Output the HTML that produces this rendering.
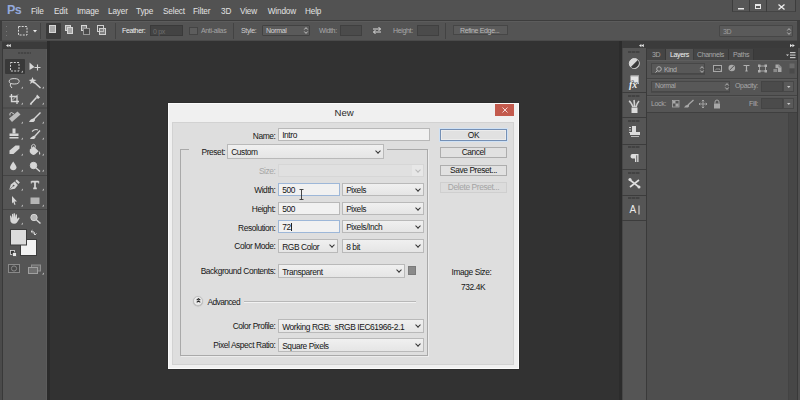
<!DOCTYPE html>
<html><head><meta charset="utf-8">
<style>
*{box-sizing:border-box;margin:0;padding:0}
html,body{width:800px;height:400px;overflow:hidden;background:#323232;font-family:"Liberation Sans",sans-serif}
.a{position:absolute}
.t{position:absolute;white-space:nowrap;line-height:1}
svg{position:absolute;overflow:visible}
/* menu */
#menubar{left:0;top:0;width:800px;height:21px;background:#525252;border-bottom:1px solid #3d3d3d}
.mi{position:absolute;top:7.6px;font-size:8.2px;letter-spacing:-0.15px;color:#e2e2e2;white-space:nowrap;line-height:1}
#opts{left:0;top:21px;width:798px;height:20px;background:#545454;border-top:1px solid #5c5c5c;box-shadow:inset 0 -1px 0 #4a4a4a}
.ot{position:absolute;font-size:7px;letter-spacing:-0.35px;color:#e0e0e0;white-space:nowrap;line-height:1}
.osep{position:absolute;top:23px;width:1px;height:16px;background:#434343}
/* panels */
.hdr{background:#3b3b3b}
.pan{background:#555555}
.grip{position:absolute;height:2px;background:repeating-linear-gradient(90deg,#6b6b6b 0 1px,#4a4a4a 1px 2px)}
.tri{position:absolute;width:0;height:0;border-left:2px solid transparent;border-bottom:2px solid #bdbdbd}
/* dialog */
#dlg{left:168px;top:103px;width:351px;height:266px;background:#f0f0f0;border:1px solid #fbfbfb;box-shadow:0 0 1px #1a1a1a}
.dl{position:absolute;font-size:8.4px;letter-spacing:-0.4px;color:#151515;white-space:nowrap;line-height:1}
.inp{position:absolute;background:#f1f1f1;border:1px solid #b8b8b8;font-size:8.4px;letter-spacing:-0.4px;color:#151515;line-height:11px;padding-left:3.2px;padding-top:1px;white-space:nowrap}
.sel{position:absolute;background:linear-gradient(#f0f0f0,#e5e5e5);border:1px solid #b9b9b9;font-size:8.4px;letter-spacing:-0.4px;color:#151515;line-height:11px;padding-left:3.2px;padding-top:1px;white-space:nowrap}
.chev{position:absolute;width:4px;height:4px;border-right:1px solid #333;border-bottom:1px solid #333;transform:rotate(45deg)}
.btn{position:absolute;background:#e1e1e1;border:1px solid #adadad;font-size:8.4px;letter-spacing:-0.4px;color:#151515;text-align:center;line-height:9px;white-space:nowrap}
</style></head>
<body>
<!-- MENU BAR -->
<div id="menubar" class="a">
  <div class="t" style="left:7px;top:4px;font-size:12.5px;font-weight:bold;color:#94a9dc;letter-spacing:-0.7px">Ps</div>
  <div class="mi" style="left:31px">File</div>
  <div class="mi" style="left:54px">Edit</div>
  <div class="mi" style="left:77px">Image</div>
  <div class="mi" style="left:108px">Layer</div>
  <div class="mi" style="left:136px">Type</div>
  <div class="mi" style="left:163px">Select</div>
  <div class="mi" style="left:193px">Filter</div>
  <div class="mi" style="left:221px">3D</div>
  <div class="mi" style="left:240px">View</div>
  <div class="mi" style="left:267.8px">Window</div>
  <div class="mi" style="left:305px">Help</div>
  <!-- window buttons -->
  <div class="a" style="left:732px;top:0;width:64px;height:12px;background:#575757;border-right:1px solid #3d3d3d;border-left:1px solid #3d3d3d;border-bottom:1px solid #444"></div>
  <div class="a" style="left:749px;top:0;width:1px;height:12px;background:#3d3d3d"></div>
  <div class="a" style="left:766px;top:0;width:1px;height:12px;background:#3d3d3d"></div>
  <div class="a" style="left:738px;top:8px;width:6px;height:1px;background:#e8e8e8;box-shadow:0 0.5px 0 #e8e8e8"></div>
  <div class="a" style="left:755px;top:4px;width:6px;height:5px;border:1px solid #e8e8e8;border-top-width:2px"></div>
  <svg style="left:778px;top:4px" width="7" height="6"><path d="M0.5 0.5L6.5 5.5M6.5 0.5L0.5 5.5" stroke="#eee" stroke-width="1.3"/></svg>
</div>

<!-- OPTIONS BAR -->
<div id="opts" class="a"></div>
<div class="a" style="left:0;top:41px;width:2px;height:359px;background:#4a4a4a"></div><div class="a" style="left:0;top:21px;width:2px;height:20px;background:#3c3c3c"></div>
<div class="a" style="left:797px;top:21px;width:3px;height:20px;background:#3f3f3f"></div>
<!-- grip dots -->
<div class="a" style="left:6px;top:26px;width:1px;height:1px;background:#777"></div>
<div class="a" style="left:6px;top:31px;width:1px;height:1px;background:#777"></div>
<div class="a" style="left:6px;top:35px;width:1px;height:1px;background:#777"></div>
<svg style="left:17px;top:25px" width="12" height="12"><rect x="1.5" y="1.5" width="8.5" height="8.5" fill="none" stroke="#d8d8d8" stroke-dasharray="2 1.2"/></svg>
<svg style="left:33px;top:30px" width="4" height="3"><path d="M0 0H4L2 2.5Z" fill="#e8e8e8"/></svg>
<div class="osep" style="left:40px"></div>
<div class="a" style="left:46px;top:23px;width:15px;height:16px;background:#3b3b3b;border-radius:1px"></div>
<div class="a" style="left:49px;top:25px;width:7px;height:8px;background:#a9a9a9;border:1px solid #d6d6d6"></div>
<!-- add -->
<div class="a" style="left:65px;top:25px;width:6px;height:6px;background:#9c9c9c;border:1px solid #d6d6d6"></div>
<div class="a" style="left:67px;top:27px;width:6px;height:7px;background:#a8a8a8;border:1px solid #d6d6d6"></div>
<!-- subtract -->
<div class="a" style="left:81px;top:25px;width:6px;height:6px;background:#8a8a8a;border:1px solid #d6d6d6"></div>
<div class="a" style="left:83px;top:28px;width:7px;height:7px;background:#4a4a4a;border:1px solid #9a9a9a"></div>
<!-- intersect -->
<div class="a" style="left:97px;top:25px;width:7px;height:7px;border:1px solid #d0d0d0"></div>
<div class="a" style="left:99px;top:28px;width:7px;height:7px;border:1px solid #d0d0d0;background:rgba(170,170,170,.5)"></div>
<div class="osep" style="left:115px"></div>
<div class="ot" style="left:122px;top:27px;color:#eeeeee;">Feather:</div>
<div class="a" style="left:150px;top:25px;width:33px;height:11px;background:#434343;border:1px solid #3a3a3a"></div>
<div class="ot" style="left:153px;top:27.5px;color:#6e6e6e">0 px</div>
<div class="a" style="left:189px;top:27px;width:9px;height:8px;background:#5d5d5d;border:1px solid #444"></div>
<div class="ot" style="left:201px;top:27px;color:#a4a4a4;">Anti-alias</div>
<div class="osep" style="left:233px"></div>
<div class="ot" style="left:241px;top:27px;color:#cfcfcf;">Style:</div>
<div class="a" style="left:262px;top:25px;width:48px;height:11px;background:#5a5a5a;border:1px solid #424242;border-radius:1px"></div>
<div class="ot" style="left:266px;top:27px;color:#d4d4d4;">Normal</div>
<svg style="left:304px;top:27px" width="4" height="7"><path d="M0.3 2.5L2 0.6L3.7 2.5M0.3 4.5L2 6.4L3.7 4.5" stroke="#cfcfcf" stroke-width="0.9" fill="none"/></svg>
<div class="ot" style="left:319px;top:27px;color:#a8a8a8;">Width:</div>
<div class="a" style="left:340px;top:25px;width:22px;height:11px;background:#4b4b4b;border:1px solid #404040"></div>
<svg style="left:372px;top:26px" width="10" height="9"><path d="M1 3H8.5M6.5 1L8.5 3L6.5 5M9 6H1.5M3.5 4L1.5 6L3.5 8" stroke="#dcdcdc" stroke-width="1" fill="none"/></svg>
<div class="ot" style="left:393px;top:27px;color:#a8a8a8;">Height:</div>
<div class="a" style="left:417px;top:25px;width:22px;height:11px;background:#4b4b4b;border:1px solid #404040"></div>
<div class="osep" style="left:445px"></div>
<div class="a" style="left:453px;top:25px;width:55px;height:10px;background:#5b5b5b;border:1px solid #464646"></div>
<div class="ot" style="left:460px;top:27px;color:#bcbcbc;">Refine Edge...</div>
<div class="a" style="left:719px;top:25px;width:74px;height:12px;background:#5a5a5a;border:1px solid #474747;border-radius:1px"></div>
<div class="ot" style="left:723px;top:28px;color:#9e9e9e">3D</div>
<svg style="left:787px;top:28px" width="4" height="7"><path d="M0.3 2.5L2 0.6L3.7 2.5M0.3 4.5L2 6.4L3.7 4.5" stroke="#bdbdbd" stroke-width="0.9" fill="none"/></svg>

<!-- LEFT TOOLS -->
<div class="a hdr" style="left:2px;top:41px;width:45px;height:7.5px;border-top:1px solid #444"></div>
<svg style="left:5.5px;top:43.5px" width="5" height="4"><path d="M0 1.6L2.4 0V3.2ZM2.4 1.6L4.8 0V3.2Z" fill="#e8e8e8"/></svg>
<div class="a pan" style="left:2px;top:48.5px;width:45px;height:352px;border-left:1px solid #393939;border-right:1px solid #5b5b5b"></div><div class="a" style="left:47px;top:41px;width:3px;height:359px;background:#2b2b2b"></div>
<div class="grip" style="left:18px;top:51.5px;width:13px;height:2px;background:repeating-linear-gradient(90deg,#454545 0 2px,#505050 2px 3px)"></div>
<div class="a" style="left:5px;top:59px;width:20px;height:15px;background:#393939;border-radius:1px"></div>
<svg style="left:0;top:0" width="50" height="280">
 <g fill="none" stroke="#d6d6d6" stroke-width="1">
  <!-- marquee -->
  <rect x="10.5" y="62.5" width="8.5" height="8.5" stroke-dasharray="2 1.3"/>
  <!-- lasso -->
  <ellipse cx="14.2" cy="81.3" rx="5" ry="2.7"/>
  <path d="M10.5 83.5Q9.5 86 12 88"/>
  <!-- crop -->
  <path d="M11.5 94V101.5H19M9.5 96.5H17V104" stroke-width="1.3"/>
  <path d="M12 100.5L18 94.5" stroke-width="0.8"/>
  <!-- brush -->
  <path d="M40.5 112.5L34 119" stroke-width="1.4"/>
  <!-- history brush -->
  <path d="M32 131.5Q35 128.5 38 130" stroke-width="1.1"/>
  <path d="M40 130.5L35 136" stroke-width="1.3"/>
  <!-- dodge -->
  <circle cx="33.5" cy="165.5" r="3.2" fill="#d6d6d6"/>
  <path d="M36 168L40 171.5" stroke-width="1.4"/>
  <!-- T -->
  <path d="M31.5 181.6H38.5M35 181.6V188.3M33.2 188.3H36.8" stroke-width="1.7"/><path d="M31.3 181V183.5M38.7 181V183.5" stroke-width="1"/>
  <!-- zoom -->
  <circle cx="34" cy="217.5" r="3.2" fill="#b8b8b8"/>
  <path d="M36.5 220L40.5 223.5" stroke-width="1.6"/>
 </g>
 <g fill="#d6d6d6">
  <!-- move -->
  <path d="M29.5 62.5L34.5 67L29.5 70Z"/>
  <path d="M37.5 64.5V70.5M34.5 67.5H40.5" stroke="#d6d6d6" stroke-width="1.1"/>
  <!-- wand -->
  <path d="M32.5 77L33.5 79.5L36.5 80L34 81.5L34.5 84L32.5 82.5L30 84L30.8 81.5L28.8 80L31.5 79.5Z"/>
  <path d="M34 82L40.5 88" stroke="#d6d6d6" stroke-width="1.5"/>
  <!-- eyedropper -->
  <path d="M37 94.5L40 97.5L38 99L36 97Z"/>
  <path d="M36.5 97.5L31 103.5L30.5 104.5L31.5 103.5" stroke="#d6d6d6" stroke-width="1.6"/>
  <!-- healing -->
  <path d="M9 118.5L17.5 111.5L20.5 114.5L12 122Z" fill="#bdbdbd"/>
  <path d="M10 115.5Q9 113 11.5 112.5L14 114" fill="none" stroke="#d6d6d6" stroke-width="0.9"/>
  <!-- brush tip -->
  <path d="M34.5 118Q30 119 29 122H33.5Q35.5 121 35 119Z"/>
  <!-- stamp -->
  <path d="M12.5 128.5H15.5V133.5H12.5Z"/>
  <path d="M9.5 133.5H18.5V136H9.5ZM9.5 137H18.5V138.5H9.5Z"/>
  <!-- history brush tip -->
  <path d="M35 135.5Q31 136.5 30 139H34Q36 138 35.5 136Z"/>
  <!-- eraser -->
  <path d="M9.5 150.5L15.5 145.5H19.5V148.5L13.5 154H9.5Z"/>
  <!-- bucket -->
  <path d="M29.8 149.5L33.6 146.2L38.6 151.2L35 154.6Q32.5 155.5 30.8 153.6Q29.2 151.8 29.8 149.5Z"/><path d="M31.5 148Q31 144.5 33.5 144.3Q35.5 144.2 35.5 147.5" fill="none" stroke="#d6d6d6" stroke-width="0.9"/>
  <path d="M39 151Q41 153 40 155Q38.5 154 39 151Z"/>
  <!-- blur drop -->
  <path d="M13.2 161.5Q16.5 166 16.5 167.5A3.3 3.3 0 0 1 10 167.5Q10 166 13.2 161.5Z"/>
  <!-- pen -->
  <path d="M9.3 189.7L10.8 184.6L14.6 181.6L17.9 184.9L14.9 188.7Z"/><path d="M15.3 180.9L16.8 179.4L19.9 182.5L18.4 184Z"/><circle cx="13.6" cy="185.6" r="0.9" fill="#555"/><path d="M9.6 189.4L13 186.2" stroke="#555" stroke-width="0.6"/>
  <!-- path select -->
  <path d="M12 196L17 201.5H14.5L15.5 204.5L14.5 205L13.2 202L12 203.5Z"/>
  <!-- rectangle -->
  <rect x="30.5" y="197.5" width="9" height="6.5" fill="#b5b5b5"/>
  <!-- hand -->
  <path d="M10 216.5Q10 215 11 215.5L12 218V214.5Q12 213.5 13 214L13.5 217.5V213.5Q14.2 212.8 15 213.5V217.5L15.8 214.5Q16.8 214 17 215V219L18.5 217.5Q19.8 217.5 19.5 218.5L17 222.5Q16 223.8 14 223.8Q11.5 223.8 10.5 221.5Z"/>
  <!-- markers -->
  <path d="M21 72.5H23V70.5Z M21 88.5H23V86.5Z M42 88.5H44V86.5Z M21 104.5H23V102.5Z M42 104.5H44V102.5Z M21 123.5H23V121.5Z M42 123.5H44V121.5Z M21 139.5H23V137.5Z M42 139.5H44V137.5Z M21 155.5H23V153.5Z M42 155.5H44V153.5Z M21 171.5H23V169.5Z M42 171.5H44V169.5Z M21 190.5H23V188.5Z M42 190.5H44V188.5Z M21 206.5H23V204.5Z M42 206.5H44V204.5Z M21 224.5H23V222.5Z M42 274.5H44V272.5Z" fill="#bcbcbc"/>
 </g>
 <!-- separators -->
 <rect x="3" y="107.5" width="44" height="1" fill="#444"/>
 <rect x="3" y="175" width="44" height="1" fill="#444"/>
 <rect x="3" y="209" width="44" height="1" fill="#444"/>
 <!-- FG/BG -->
 <rect x="20.5" y="239.5" width="16" height="16" fill="#f2f2f2" stroke="#3c3c3c"/>
 <rect x="10.5" y="229.5" width="16" height="15.5" fill="#dcdcdc" stroke="#3c3c3c"/>
 <path d="M31 231.5Q35 231 35 234.5M33.5 233.5L35 235L36.5 233.5M31 231.5L32.5 230.2M31 231.5L32.5 232.8" fill="none" stroke="#e0e0e0" stroke-width="0.9"/>
 <rect x="10.5" y="250.5" width="4" height="4" fill="#333" stroke="#dcdcdc" stroke-width="0.8"/>
 <rect x="12.5" y="252.5" width="4" height="4" fill="#e8e8e8" stroke="#333" stroke-width="0.6"/>
 <!-- quick mask -->
 <rect x="8.5" y="264.5" width="11" height="8" fill="#4a4a4a" stroke="#8a8a8a"/>
 <circle cx="14" cy="268.5" r="2.6" fill="none" stroke="#8a8a8a"/>
 <!-- screen mode -->
 <rect x="31.5" y="265" width="9" height="6" fill="#6a6a6a" stroke="#909090"/>
 <rect x="28.5" y="267.5" width="9" height="6" fill="#707070" stroke="#a0a0a0"/>
</svg>

<!-- RIGHT PANELS -->
<div class="a hdr" style="left:622px;top:41px;width:178px;height:7px"></div>
<svg style="left:638.5px;top:43.5px" width="5" height="4"><path d="M0 1.6L2.4 0V3.2ZM2.4 1.6L4.8 0V3.2Z" fill="#e8e8e8"/></svg>
<svg style="left:790px;top:43.5px" width="5" height="4"><path d="M4.8 1.6L2.4 0V3.2ZM2.4 1.6L0 0V3.2Z" fill="#e8e8e8"/></svg>
<div class="a" style="left:619px;top:41px;width:3px;height:359px;background:#2c2c2c"></div><div class="a pan" style="left:622px;top:48px;width:24px;height:352px;border-left:1px solid #474747"></div>
<div class="a" style="left:646px;top:48px;width:1px;height:352px;background:#3a3a3a"></div>
<!-- strip groups -->
<div class="a" style="left:622px;top:92px;width:24px;height:1px;background:#3c3c3c"></div>
<div class="a" style="left:622px;top:117px;width:24px;height:1px;background:#3c3c3c"></div>
<div class="a" style="left:622px;top:143.5px;width:24px;height:1px;background:#3c3c3c"></div>
<div class="a" style="left:622px;top:169px;width:24px;height:1px;background:#3c3c3c"></div>
<div class="a" style="left:622px;top:194.5px;width:24px;height:1px;background:#3c3c3c"></div>
<div class="a" style="left:622px;top:220px;width:24px;height:1px;background:#3c3c3c"></div>
<div class="a" style="left:628px;top:51px;width:12px;height:2px;background:repeating-linear-gradient(90deg,#424242 0 3px,#4c4c4c 3px 4px)"></div>
<div class="a" style="left:628px;top:95px;width:12px;height:2px;background:repeating-linear-gradient(90deg,#424242 0 3px,#4c4c4c 3px 4px)"></div>
<div class="a" style="left:628px;top:120px;width:12px;height:2px;background:repeating-linear-gradient(90deg,#424242 0 3px,#4c4c4c 3px 4px)"></div>
<div class="a" style="left:628px;top:146px;width:12px;height:2px;background:repeating-linear-gradient(90deg,#424242 0 3px,#4c4c4c 3px 4px)"></div>
<div class="a" style="left:628px;top:171.5px;width:12px;height:2px;background:repeating-linear-gradient(90deg,#424242 0 3px,#4c4c4c 3px 4px)"></div>
<div class="a" style="left:628px;top:197px;width:12px;height:2px;background:repeating-linear-gradient(90deg,#424242 0 3px,#4c4c4c 3px 4px)"></div>
<svg style="left:618px;top:40px" width="30" height="190">
 <circle cx="16.3" cy="23.5" r="5" fill="#d8d8d8" stroke="#d8d8d8"/>
 <path d="M19.8 20A5 5 0 0 1 12.8 27Z" fill="#3a3a3a"/>
 <rect x="12.5" y="35.5" width="8.5" height="8.5" fill="#e4e4e4"/>
 <path d="M13 36H20.5V43.5" fill="none" stroke="#9a9a9a" stroke-width="0.8"/>
 <text x="11" y="47.5" font-family="Liberation Serif" font-style="italic" font-weight="bold" font-size="10" fill="#f0f0f0" stroke="#535353" stroke-width="1.2" paint-order="stroke">fx</text>
 <!-- brushes -->
 <path d="M13.5 67.5H19.5V73H13.5Z" fill="#dcdcdc"/>
 <path d="M11 61Q13 62 15 67M16 60Q16.5 63 16.5 67M21 61Q19 63 18 67" stroke="#d0d0d0" stroke-width="1.6" fill="none"/>
 <!-- stamp -->
 <path d="M11 87H13V88H11ZM11 89.5H13V90.5H11ZM11 92H13V93H11Z" fill="#cfcfcf"/>
 <path d="M14 86H18V92H14ZM12 92H22V95H12ZM13 96H21V96.8H13Z" fill="#dcdcdc"/>
 <!-- pilcrow -->
 <path d="M14.5 114H20.5V122H19.2V115.2H18.3V122H17V118.5H15.5Q12.5 118.5 12.5 116.2Q12.5 114 14.5 114Z" fill="#dedede"/>
 <!-- tools -->
 <path d="M12 140L21 147M21 140L12 147" stroke="#dedede" stroke-width="1.6"/>
 <circle cx="12" cy="139.5" r="1.6" fill="#dedede"/>
 <circle cx="21" cy="147" r="1.5" fill="#dedede"/>
 <!-- A| -->
 <text x="11.6" y="173.3" font-family="Liberation Sans" font-size="10" fill="#ececec">A</text>
 <rect x="20.5" y="165.5" width="1" height="9" fill="#e6e6e6"/>
</svg>
<div class="a" style="left:647px;top:48px;width:153px;height:12px;background:#3d3d3d"></div>
<div class="a pan" style="left:647px;top:60px;width:151px;height:340px"></div>
<div class="a" style="left:797px;top:48px;width:1px;height:352px;background:#393939"></div>
<div class="a" style="left:798px;top:48px;width:2px;height:352px;background:#505050"></div>
<!-- tabs -->
<div class="a" style="left:647px;top:49px;width:18.5px;height:11px;background:#454545;border-right:1px solid #383838"></div>
<div class="ot" style="left:652px;top:50.5px;color:#a8a8a8;">3D</div>
<div class="a" style="left:666px;top:49px;width:27px;height:12px;background:#535353"></div>
<div class="ot" style="left:670px;top:50.5px;color:#f4f4f4">Layers</div>
<div class="a" style="left:693.5px;top:49px;width:35px;height:11px;background:#454545;border-right:1px solid #383838"></div>
<div class="ot" style="left:697px;top:50.5px;color:#a8a8a8;">Channels</div>
<div class="a" style="left:729px;top:49px;width:25px;height:11px;background:#454545;border-right:1px solid #383838"></div>
<div class="ot" style="left:733px;top:50.5px;color:#a8a8a8;">Paths</div>
<svg style="left:786px;top:52px" width="10" height="7"><path d="M0 2.5H3L1.5 4Z" fill="#ddd"/><rect x="4" y="0" width="5.5" height="1.2" fill="#c4c4c4"/><rect x="4" y="2.5" width="5.5" height="1.2" fill="#c4c4c4"/><rect x="4" y="5" width="5.5" height="1.2" fill="#c4c4c4"/></svg>
<div class="a" style="left:647px;top:60px;width:150px;height:1px;background:#5e5e5e"></div>
<!-- kind row -->
<div class="a" style="left:651px;top:63px;width:54px;height:11px;background:#585858;border:1px solid #474747;box-shadow:0 1px 0 #4a4a4a"></div>
<svg style="left:655px;top:66px" width="7" height="7"><circle cx="4" cy="3" r="2.3" fill="none" stroke="#b8b8b8" stroke-width="0.9"/><path d="M2.3 4.7L0.5 6.5" stroke="#b8b8b8" stroke-width="1"/></svg>
<div class="ot" style="left:664px;top:65.5px;color:#b4b4b4">Kind</div>
<svg style="left:700px;top:65.5px" width="4" height="7"><path d="M0.3 2.5L2 0.6L3.7 2.5M0.3 4.5L2 6.4L3.7 4.5" stroke="#bdbdbd" stroke-width="0.9" fill="none"/></svg>
<svg style="left:710px;top:62px" width="88" height="14">
 <rect x="3.5" y="3.5" width="8" height="6" fill="#4a4a4a" stroke="#a8a8a8"/>
 <path d="M5 8.5L7 6.5L8 7.5L9 6.5L10.5 8.5" stroke="#a8a8a8" stroke-width="0.8" fill="none"/>
 <circle cx="21.8" cy="6" r="3.3" fill="#a8a8a8"/>
 <path d="M24 3.8L19.6 8.2" stroke="#555" stroke-width="1"/>
 <path d="M33.5 3.5H39.5M36.5 3.5V9M35.3 9H37.7" stroke="#b0b0b0" stroke-width="1.2" fill="none"/>
 <rect x="49.5" y="4" width="6" height="5" fill="none" stroke="#a8a8a8" stroke-width="0.9"/>
 <rect x="48" y="2.5" width="2.5" height="2.5" fill="#b0b0b0"/><rect x="54.5" y="2.5" width="2.5" height="2.5" fill="#b0b0b0"/>
 <rect x="48" y="8" width="2.5" height="2.5" fill="#b0b0b0"/><rect x="54.5" y="8" width="2.5" height="2.5" fill="#b0b0b0"/>
 <path d="M65.5 2.5H69L71.5 5V10H65.5Z" fill="#a8a8a8"/>
 <path d="M69 2.5V5H71.5" fill="none" stroke="#6a6a6a" stroke-width="0.7"/>
 <rect x="63" y="6.5" width="4.5" height="4" fill="#8a8a8a" stroke="#535353" stroke-width="0.8"/>
 <rect x="79.5" y="1.5" width="5" height="5" fill="#6a6a6a"/>
 <rect x="79.5" y="6.5" width="5" height="5" fill="#4a4a4a"/>
</svg>
<div class="a" style="left:647px;top:77.5px;width:150px;height:1px;background:#434343"></div>
<div class="a" style="left:647px;top:78.5px;width:150px;height:1px;background:#5a5a5a"></div>
<!-- blend row -->
<div class="a" style="left:651px;top:81px;width:79px;height:10.5px;background:#585858;border:1px solid #474747;box-shadow:0 1px 0 #4a4a4a"></div>
<div class="ot" style="left:655px;top:82.3px;color:#a8a8a8">Normal</div>
<svg style="left:725px;top:83px" width="4" height="7"><path d="M0.3 2.5L2 0.6L3.7 2.5M0.3 4.5L2 6.4L3.7 4.5" stroke="#bdbdbd" stroke-width="0.9" fill="none"/></svg>
<div class="ot" style="left:735px;top:82px;color:#a8a8a8;">Opacity:</div>
<div class="a" style="left:761px;top:81px;width:22px;height:10.5px;background:#4b4b4b;border:1px solid #444"></div>
<div class="a" style="left:783px;top:81px;width:11px;height:10.5px;background:#5a5a5a;border:1px solid #474747"></div>
<svg style="left:787px;top:86px" width="4" height="3"><path d="M0 0H3.5L1.75 2Z" fill="#c8c8c8"/></svg>
<div class="a" style="left:647px;top:94.5px;width:150px;height:1px;background:#434343"></div>
<div class="a" style="left:647px;top:95.5px;width:150px;height:1px;background:#5a5a5a"></div>
<!-- lock row -->
<div class="ot" style="left:651px;top:100px;color:#a8a8a8;">Lock:</div>
<svg style="left:668px;top:97px" width="60" height="14">
 <rect x="4.5" y="3.5" width="6.5" height="6.5" fill="none" stroke="#a8a8a8" stroke-width="0.8"/>
 <path d="M5 4H7.5V6.5H5ZM7.5 6.5H10.5V9.5H7.5Z" fill="#a8a8a8"/>
 <path d="M25.5 3L20 8" stroke="#a8a8a8" stroke-width="1.3"/>
 <path d="M20.5 7.5Q17 8 16 10.5H20Q21.5 9.5 21 8Z" fill="#a8a8a8"/>
 <path d="M35 3V11M31 7H39M33.8 4.2L35 3L36.2 4.2M33.8 9.8L35 11L36.2 9.8M32.2 5.8L31 7L32.2 8.2M37.8 5.8L39 7L37.8 8.2" stroke="#a8a8a8" stroke-width="0.9" fill="none"/>
 <path d="M47 6.5V5Q47 3 49 3Q51 3 51 5V6.5" stroke="#a8a8a8" stroke-width="1" fill="none"/>
 <rect x="46" y="6.5" width="6" height="5" fill="#a8a8a8"/>
</svg>
<div class="ot" style="left:749px;top:100px;color:#a8a8a8;">Fill:</div>
<div class="a" style="left:761px;top:97.5px;width:22px;height:11px;background:#4b4b4b;border:1px solid #444"></div>
<div class="a" style="left:783px;top:97.5px;width:11px;height:11px;background:#5a5a5a;border:1px solid #474747"></div>
<svg style="left:787px;top:102.5px" width="4" height="3"><path d="M0 0H3.5L1.75 2Z" fill="#c8c8c8"/></svg>
<div class="a" style="left:647px;top:112px;width:150px;height:1px;background:#3f3f3f"></div>
<div class="a" style="left:647px;top:113px;width:150px;height:287px;background:#4e4e4e"></div>
<div class="a" style="left:788px;top:113px;width:9px;height:287px;background:#474747;border-left:1px solid #434343"></div>

<!-- DIALOG -->
<div id="dlg" class="a"></div>
<div class="t" style="left:334.5px;top:108.3px;font-size:9.6px;color:#2a2a2a">New</div>
<div class="a" style="left:495px;top:104px;width:19px;height:12px;background:#c35a4d"></div>
<svg style="left:502px;top:107px" width="6" height="6"><path d="M0.5 0.5L5.5 5.5M5.5 0.5L0.5 5.5" stroke="#fbeeee" stroke-width="0.85"/></svg>
<div class="a" style="left:172px;top:122px;width:342px;height:243px;background:#dedede;border:1px solid #d2d2d2"></div>
<!-- group box -->
<div class="a" style="left:180px;top:148.5px;width:248px;height:207px;border:1px solid #a9a9a9;box-shadow:1px 1px 0 #ececec"></div>
<div class="a" style="left:189px;top:145px;width:198px;height:8px;background:#dedede"></div>
<!-- labels -->
<div class="dl" style="right:524.5px;top:131.8px">Name:</div>
<div class="dl" style="left:201.5px;top:147.8px">Preset:</div>
<div class="dl" style="right:524.5px;top:166.8px;color:#a6a6a6">Size:</div>
<div class="dl" style="right:524.5px;top:186.3px">Width:</div>
<div class="dl" style="right:524.5px;top:204.8px">Height:</div>
<div class="dl" style="right:524.5px;top:223.8px">Resolution:</div>
<div class="dl" style="right:524.5px;top:242.3px">Color Mode:</div>
<div class="dl" style="right:524.5px;top:266.8px">Background Contents:</div>
<div class="dl" style="left:207.5px;top:297.8px;letter-spacing:-0.6px">Advanced</div>
<div class="dl" style="right:524.5px;top:321.8px">Color Profile:</div>
<div class="dl" style="right:524.5px;top:340.8px">Pixel Aspect Ratio:</div>
<!-- fields -->
<div class="inp" style="left:278px;top:128px;width:152px;height:13px">Intro</div>
<div class="sel" style="left:227px;top:144px;width:157px;height:15px;line-height:13px">Custom</div>
<div class="chev" style="left:375.5px;top:148.5px"></div>
<div class="sel" style="left:278px;top:164px;width:146px;height:13px;background:#e0e0e0;border-color:#d6d6d6"></div><div class="a" style="left:412px;top:165px;width:11px;height:11px;background:#e7e7e7"></div>
<div class="chev" style="left:416px;top:168px;border-color:#b8b8b8"></div>
<div class="inp" style="left:278px;top:183px;width:62px;height:13px;border-color:#9db7d8">500</div>
<svg style="left:299px;top:188.5px" width="5" height="12"><path d="M0.5 0.5H4.5M2.5 0.5V10.5M0.5 10.5H4.5" stroke="#333" stroke-width="0.9" fill="none"/></svg>
<div class="sel" style="left:342px;top:183px;width:82px;height:13px">Pixels</div>
<div class="chev" style="left:416px;top:187px"></div>
<div class="inp" style="left:278px;top:202px;width:62px;height:13px">500</div>
<div class="sel" style="left:342px;top:202px;width:82px;height:13px">Pixels</div>
<div class="chev" style="left:416px;top:206px"></div>
<div class="inp" style="left:278px;top:220px;width:62px;height:13px;border-color:#9db7d8">72<span style="display:inline-block;width:0.8px;height:8px;background:#222;vertical-align:-1px;margin-left:0.3px"></span></div>
<div class="sel" style="left:342px;top:220px;width:82px;height:13px">Pixels/Inch</div>
<div class="chev" style="left:416px;top:224px"></div>
<div class="sel" style="left:278px;top:239px;width:60px;height:14px;line-height:12px">RGB Color</div>
<div class="chev" style="left:330px;top:243px"></div>
<div class="sel" style="left:342px;top:239px;width:82px;height:14px;line-height:12px">8 bit</div>
<div class="chev" style="left:416px;top:243px"></div>
<div class="sel" style="left:278px;top:263.5px;width:127px;height:14px;line-height:12px">Transparent</div>
<div class="chev" style="left:397px;top:267.5px"></div>
<div class="a" style="left:408px;top:266px;width:8px;height:9px;background:#8a8a8a;border:1px solid #7a7a7a"></div>
<!-- advanced -->
<div class="a" style="left:193.2px;top:295.6px;width:10.2px;height:10.2px;border-radius:50%;background:#ececec;border:1px solid #c2c2c2;box-shadow:0 0.5px 1px #b0b0b0"></div>
<svg style="left:195.8px;top:298.3px" width="5" height="5"><path d="M0.7 2.2L2.5 0.7L4.3 2.2M0.7 4.4L2.5 2.9L4.3 4.4" stroke="#222" stroke-width="1.1" fill="none"/></svg>
<div class="a" style="left:244px;top:300.5px;width:172px;height:1px;background:#b8b8b8;box-shadow:0 1px 0 #f2f2f2"></div>
<div class="sel" style="left:278px;top:319px;width:146px;height:14px;line-height:12px;">Working RGB:&nbsp; sRGB IEC61966-2.1</div>
<div class="chev" style="left:416px;top:323px"></div>
<div class="sel" style="left:278px;top:338px;width:146px;height:13.5px;line-height:12px">Square Pixels</div>
<div class="chev" style="left:416px;top:342px"></div>
<!-- buttons -->
<div class="btn" style="left:440px;top:129px;width:67px;height:12px;border-color:#7590b5;line-height:10px;box-shadow:0 0 0 1px #cfe1f4, inset 0 0 0 1px #ececec">OK</div>
<div class="btn" style="left:440px;top:147px;width:67px;height:11px">Cancel</div>
<div class="btn" style="left:440px;top:164.5px;width:67px;height:11px">Save Preset...</div>
<div class="btn" style="left:440px;top:182px;width:67px;height:11px;background:#dcdcdc;border-color:#cfcfcf;color:#a4a4a4">Delete Preset...</div>
<div class="dl" style="left:451.5px;top:267.8px">Image Size:</div>
<div class="dl" style="left:461px;top:282.8px">732.4K</div>

</body></html>
